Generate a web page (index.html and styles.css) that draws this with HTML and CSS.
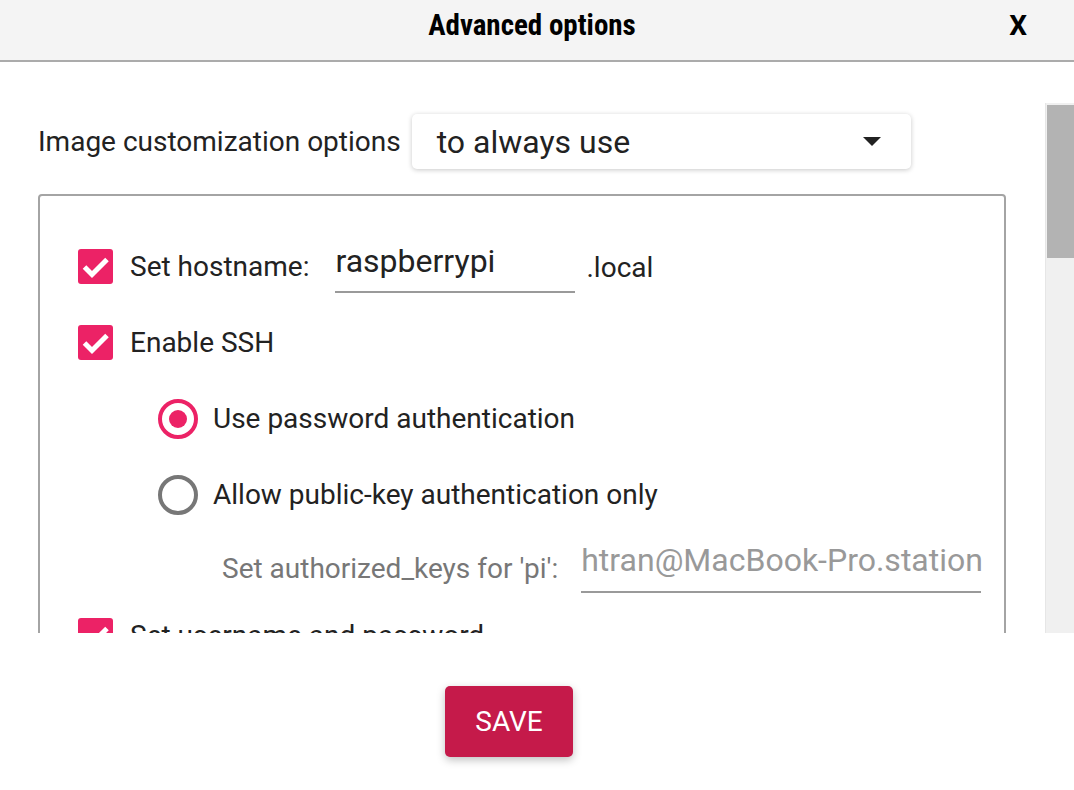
FILE: index.html
```html
<!DOCTYPE html>
<html>
<head>
<meta charset="utf-8">
<link rel="stylesheet" href="styles.css">
</head>
<body>
<div class="header">
  <div class="spacer"></div>
  <div class="title">Advanced options</div>
  <div class="close">X</div>
</div>
<div class="main">
  <div class="scroll">
    <div class="top-row">
      <span class="label">Image customization options</span>
      <div class="select">
        <span class="select-text">to always use</span>
        <svg class="arrow" width="18" height="9" viewBox="0 0 18 9"><path d="M0 0 L18 0 L9 9 Z" fill="#222"/></svg>
      </div>
    </div>
    <div class="group">
      <div class="row">
        <span class="checkbox"><svg width="35" height="35" viewBox="0 0 35 35"><path d="M6.5 18 L14 25.5 L29 10.5" fill="none" stroke="#fff" stroke-width="5"/></svg></span>
        <span class="label">Set hostname:</span>
        <div class="input host"><span>raspberrypi</span></div>
        <span class="label suffix">.local</span>
      </div>
      <div class="row">
        <span class="checkbox"><svg width="35" height="35" viewBox="0 0 35 35"><path d="M6.5 18 L14 25.5 L29 10.5" fill="none" stroke="#fff" stroke-width="5"/></svg></span>
        <span class="label">Enable SSH</span>
      </div>
      <div class="row indent">
        <span class="radio on"><span class="dot"></span></span>
        <span class="label">Use password authentication</span>
      </div>
      <div class="row indent">
        <span class="radio"></span>
        <span class="label">Allow public-key authentication only</span>
      </div>
      <div class="row keys">
        <span class="label muted">Set authorized_keys for 'pi':</span>
        <div class="input key"><span>htran@MacBook-Pro.station</span></div>
      </div>
      <div class="row">
        <span class="checkbox"><svg width="35" height="35" viewBox="0 0 35 35"><path d="M6.5 18 L14 25.5 L29 10.5" fill="none" stroke="#fff" stroke-width="5"/></svg></span>
        <span class="label">Set username and password</span>
      </div>
    </div>
  </div>
  <div class="scrollbar"><div class="thumb"></div></div>
</div>
<div class="footer">
  <button class="save">SAVE</button>
</div>
</body>
</html>
```
FILE: styles.css
```css
* { box-sizing: border-box; }
html, body { margin: 0; padding: 0; }
body {
  width: 1074px;
  height: 790px;
  overflow: hidden;
  background: #fff;
  font-family: Roboto, "Noto Sans", sans-serif;
  color: #222;
}
.header {
  height: 62px;
  background: #f4f4f4;
  border-bottom: 2px solid #ababab;
  display: grid;
  grid-template-columns: 1fr auto 1fr;
  align-items: center;
  padding-bottom: 10px;
}
.title {
  font-family: "Liberation Sans Narrow", "Roboto Condensed", Roboto, sans-serif;
  font-weight: bold;
  font-size: 29px;
  color: #000;
  margin-right: 10px;
}
.close {
  justify-self: end;
  font-family: "Liberation Sans Narrow", Roboto, sans-serif;
  font-weight: bold;
  font-size: 28px;
  color: #000;
  margin-right: 47px;
}
.main {
  margin-top: 41px;
  height: 530px;
  display: flex;
}
.scroll {
  flex: 1;
  overflow: hidden;
  padding: 11px 39px 0 38px;
}
.top-row {
  display: flex;
  align-items: center;
  gap: 11px;
}
.label {
  font-size: 28px;
  color: #222;
  white-space: nowrap;
}
.select {
  width: 499px;
  height: 55px;
  background: #fff;
  border-radius: 5px;
  box-shadow: 0 1px 5px rgba(0,0,0,0.22);
  display: flex;
  align-items: center;
  justify-content: space-between;
  padding: 0 30px 0 25px;
}
.select-text { font-size: 32px; color: #222; }
.group {
  margin-top: 25px;
  border: 2px solid #a4a4a4;
  border-radius: 4px;
  padding: 44px 38px 40px;
  display: flex;
  flex-direction: column;
  gap: 23px;
}
.row {
  height: 53px;
  display: flex;
  align-items: center;
}
.indent { padding-left: 80px; }
.checkbox {
  width: 35px;
  height: 35px;
  border-radius: 3px;
  background: #ec2266;
  margin-right: 17px;
  flex: none;
  display: flex;
}
.radio {
  width: 40px;
  height: 40px;
  border-radius: 50%;
  border: 4px solid #777;
  margin-right: 15px;
  flex: none;
  display: flex;
  align-items: center;
  justify-content: center;
}
.radio.on { border-color: #ec2266; }
.dot {
  width: 18px;
  height: 18px;
  border-radius: 50%;
  background: #ec2266;
}
.input {
  height: 53px;
  border-bottom: 2px solid #9a9a9a;
  padding-top: 2px;
  align-self: flex-start;
}
.input span { font-size: 32px; white-space: nowrap; }
.host { width: 240px; margin-left: 26px; margin-right: 11px; }
.suffix { padding-top: 2px; }
.keys { padding-left: 144px; height: 49px; margin-bottom: -7px; }
.muted { color: #777; }
.key { width: 400px; height: 49px; margin-left: 23px; padding-top: 0; line-height: 1; }
.key span { color: #999; }
.scrollbar {
  width: 29px;
  height: 530px;
  background: #f0f0f0;
  border-left: 1px solid #e6e6e6;
  padding: 2px 0 0 1px;
  flex: none;
}
.thumb {
  height: 153px;
  background: #b3b3b3;
}
.footer {
  display: flex;
  justify-content: center;
  padding: 53px 56px 0 0;
}
.save {
  width: 128px;
  height: 71px;
  border: none;
  border-radius: 5px;
  background: #c51a4a;
  color: #fff;
  font-family: Roboto, sans-serif;
  font-size: 28px;
  box-shadow: 0 3px 8px rgba(0,0,0,0.25);
  padding: 0;
}
```
